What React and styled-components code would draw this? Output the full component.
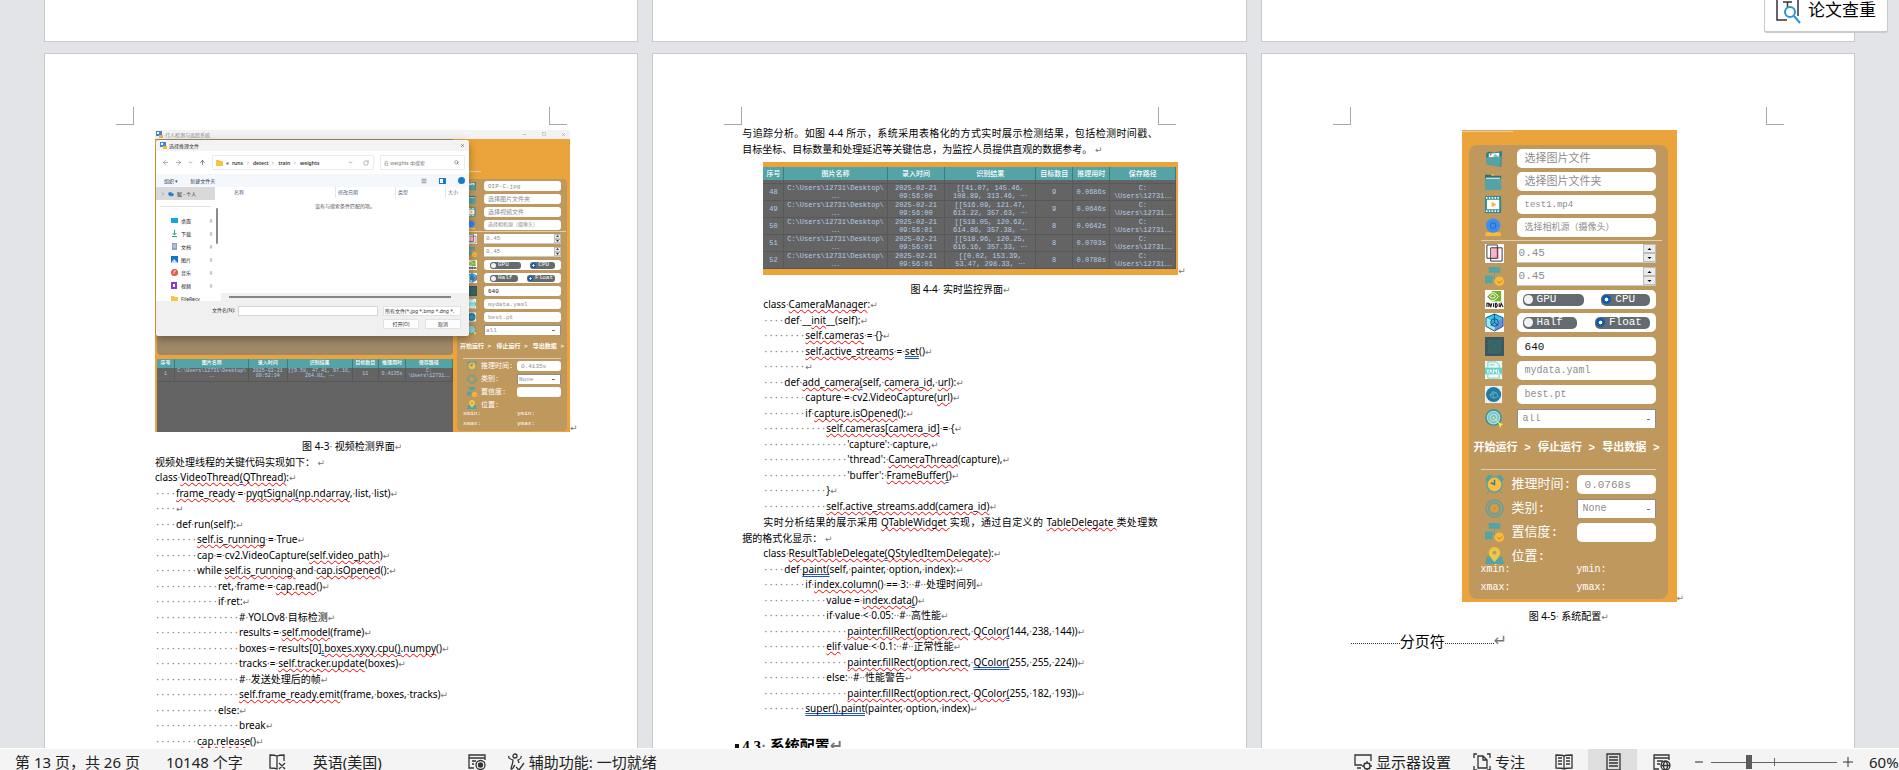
import React, { useId } from "react";
import styled, { createGlobalStyle, css, ThemeProvider } from "styled-components";
import {
  ArrowLeft, ArrowRight, ArrowUp, ChevronDown, ChevronRight, RotateCw, Search, Pin, X, Minus, Square, Menu, Cloud,
} from "lucide-react";

const UI = `"Noto Sans", "Noto Sans CJK SC", sans-serif`;
const MONO = `"Liberation Mono", "Noto Sans CJK SC", monospace`;

const Global = createGlobalStyle`
  *, *::before, *::after { box-sizing: border-box; }
  body { margin: 0; font-family: ${UI}; color: #000; }
  button, input, select { font: inherit; color: inherit; margin: 0; }
  svg { display: block; flex: none; }
`;

/* ---------- window ---------- */
const Shell = styled.div`
  height: 100vh;
  display: flex;
  flex-direction: column;
  overflow: hidden;
  position: relative;
`;
const Workspace = styled.main`
  flex: 1;
  min-height: 0;
  overflow: hidden;
  background: #e3e4e8;
  padding: 0 44px;
  display: grid;
  grid-template-columns: repeat(3, minmax(0, 1fr));
  grid-template-rows: 42px minmax(0, 1fr);
  gap: 11px 14px;
`;
const PageEnd = styled.div`
  background: #fff;
  border: 1px solid #c9cac9;
  border-top: 0;
`;
const Sheet = styled.article`
  background: #fff;
  border: 1px solid #c9cac9;
  border-bottom: 0;
  overflow: hidden;
  padding-top: 53px;
`;
const Margins = styled.div`
  display: flex;
  justify-content: space-between;
  padding: 0 70px 0 71px;
`;
const Corner = styled.i`
  width: 18px;
  height: 18px;
  border: solid #a8a8a8;
  border-width: ${(p) => (p.$right ? "0 0 1px 1px" : "0 1px 1px 0")};
`;
const Body = styled.div`
  padding: 0 88px 0 89px;
  font-size: 10px;
  line-height: 16px;
  white-space: nowrap;
`;
const Indented = styled.div`
  padding-left: 21px;
`;
const FigureRow = styled.div`
  margin: 5px 0 6px;
  display: flex;
  align-items: flex-end;
  justify-content: ${(p) => (p.$center ? "center" : "flex-start")};
`;
const Caption = styled.p`
  margin: 0;
  text-align: center;
`;
const Para = styled.p`
  margin: 0;
  text-indent: ${(p) => (p.$first ? "21px" : "0")};
  text-align-last: ${(p) => (p.$full ? "justify" : "left")};
  white-space: ${(p) => (p.$full ? "normal" : "nowrap")};
`;
const Mark = styled.span`
  color: #777;
  font-family: "DejaVu Sans", sans-serif;
  font-size: ${(p) => (p.$big ? "16px" : "9px")};
  line-height: 8px;
  margin-right: ${(p) => (p.$hang ? "-8px" : "0")};
`;
const Ret = (p) => <Mark {...p}>↵</Mark>;

/* ---------- code ---------- */
const CodeLine = styled.div`
  line-height: 15px;
  height: 15px;
  display: flex;
  align-items: baseline;
  white-space: pre;
  &:nth-child(even) { line-height: 16px; height: 16px; }
`;
const Indent = styled.span`
  display: inline-flex;
  justify-content: space-around;
  width: ${(p) => p.$n * 21}px;
  color: #777;
`;
const Dot = styled.span`
  color: #777;
`;
const Spell = styled.span`
  text-decoration: underline wavy #f00 1px;
  text-decoration-skip-ink: none;
  text-underline-offset: 1px;
`;
const Grammar = styled.span`
  text-decoration: underline double #1f55c8 1px;
  text-decoration-skip-ink: none;
  text-underline-offset: 1px;
`;
const dots = (s) => s.split(/( )/).map((t, i) => (t === " " ? <Dot key={i}>·</Dot> : t));
function Rich({ text }) {
  return text.split(/(‹[^›]*›|«[^»]*»)/).map((t, i) => {
    if (t[0] === "‹") return <Spell key={i}>{dots(t.slice(1, -1))}</Spell>;
    if (t[0] === "«") return <Grammar key={i}>{dots(t.slice(1, -1))}</Grammar>;
    return <span key={i}>{dots(t)}</span>;
  });
}
function Code({ lines }) {
  return (
    <Indented>
      {lines.map(([n, text], i) => (
        <CodeLine key={i}>
          {n > 0 && <Indent $n={n}>{Array.from({ length: n * 4 }, (_, k) => <span key={k}>·</span>)}</Indent>}
          <span><Rich text={text} /><Ret /></span>
        </CodeLine>
      ))}
    </Indented>
  );
}

const threadCode = [
  [0, "class ‹VideoThread›«(»‹QThread)›:"],
  [1, "‹frame_ready› = ‹pyqtSignal›«(»‹np.ndarray›, list, list)"],
  [1, ""],
  [1, "def run(self):"],
  [2, "‹self.is_running› = True"],
  [2, "cap = cv2.VideoCapture(‹self.video_path›)"],
  [2, "while ‹self.is_running ›and ‹cap.isOpened›():"],
  [3, "ret, frame = ‹cap.read›()"],
  [3, "if ret:"],
  [4, "# YOLOv8 目标检测"],
  [4, "results = ‹self.model›(frame)"],
  [4, "boxes = results[0]«.»‹boxes.xyxy.cpu(›«)»‹.numpy›()"],
  [4, "tracks = ‹self.tracker.update›(boxes)"],
  [4, "#  发送处理后的帧"],
  [4, "‹self.frame_ready.emit›(frame, boxes, tracks)"],
  [3, "else:"],
  [4, "break"],
  [2, "‹cap.release›()"],
];
const cameraCode = [
  [0, "class ‹CameraManager›:"],
  [1, "def __‹init›__(self):"],
  [2, "‹self.cameras› = {}"],
  [2, "‹self.active_streams› = «set»()"],
  [2, ""],
  [1, "def ‹add_camera›«(»self, ‹camera_id›, ‹url›):"],
  [2, "capture = cv2.VideoCapture(‹url›)"],
  [2, "if ‹capture.isOpened›():"],
  [3, "‹self.cameras[camera_id]› = {"],
  [4, "'capture': capture,"],
  [4, "'thread': ‹CameraThread›(capture),"],
  [4, "'buffer': ‹FrameBuffer›«(»)"],
  [3, "}"],
  [3, "‹self.active_streams.add(camera_id)›"],
];
const delegateCode = [
  [0, "class ‹ResultTableDelegate›«(»‹QStyledItemDelegate)›:"],
  [1, "def «paint(»self, painter, option, index):"],
  [2, "if ‹index.column›() == 3:  #  处理时间列"],
  [3, "value = ‹index.data›«(»)"],
  [3, "if value < 0.05:  #  高性能"],
  [4, "‹painter.fillRect(option.rect›, ‹QColor›«(»144, 238, 144))"],
  [3, "‹elif› value < 0.1:  #  正常性能"],
  [4, "‹painter.fillRect(option.rect›, «QColor(»255, 255, 224))"],
  [3, "else:  #  性能警告"],
  [4, "‹painter.fillRect(option.rect›, ‹QColor›«(»255, 182, 193))"],
  [2, "«super().paint»(painter, option, index)"],
];

/* ---------- configuration panel, in two sizes ---------- */
const full = {
  row: 19, gap: 4, joinGap: 5, wideGap: 5, pad: "4px 12px 2px 16px", iconCol: 32, icon: 19, radius: 8, r: 5,
  cn: 11, cnSmall: 9, num: 11, mono: 10, label: 13, btn: 11, btnRow: 41, coord: 10, coordRow: 18, outIcon: 27, outBox: 79,
  rule: "3px -6px 3px -4px", rule2: "0 0 5px -4px", short: 14, inset: 8, spin: 13, pill: 12, dot: 9, btnPad: "0 -4px 0 -11px",
};
const compact = {
  row: 10, gap: 3, joinGap: 3, wideGap: 3, pad: "2px 6px 2px 10px", iconCol: 17, icon: 10, radius: 4, r: 3,
  cn: 6, cnSmall: 5, num: 6, mono: 6, label: 7, btn: 6, btnRow: 23, coord: 6, coordRow: 10, outIcon: 14, outBox: 44,
  rule: "1px -5px 2px -4px", rule2: "0 0 2px -4px", short: 9, inset: 4, spin: 7, pill: 7, dot: 5, btnPad: "0 -3px 0 -7px",
};
const m = (k) => (p) => p.theme[k] + "px";

const Panel = styled.section`
  background: #bf985d;
  border-radius: ${m("radius")};
  padding: ${(p) => p.theme.pad};
  font-family: ${MONO};
  line-height: 1;
`;
const Rows = styled.div`
  display: flex;
  flex-direction: column;
  gap: ${(p) => p.theme[p.$wide ? "wideGap" : "gap"]}px;
  margin-bottom: ${(p) => (p.$join ? p.theme.joinGap : 0)}px;
`;
const ConfigRow = styled.div`
  display: grid;
  grid-template-columns: ${m("iconCol")} minmax(0, 1fr);
  align-items: center;
  height: ${m("row")};
`;
const OutRow = styled.div`
  display: grid;
  grid-template-columns: ${m("outIcon")} minmax(0, 1fr) ${m("outBox")};
  align-items: center;
  height: ${(p) => p.theme[p.$short ? "short" : "row"]}px;
  color: #fff;
  font-size: ${m("label")};
`;
const Rule = styled.hr`
  border: 0;
  height: 1px;
  background: #dccfba;
  margin: ${(p) => p.theme[p.$second ? "rule2" : "rule"]};
`;
const fieldBase = css`
  width: 100%;
  height: ${m("row")};
  min-width: 0;
  border: 0;
  outline: 0;
  background: #fff;
  color: #8d8d8d;
  padding: 0 0 0 ${m("inset")};
  border-radius: ${m("r")};
`;
const Field = styled.input`
  ${fieldBase}
  font-size: ${(p) => p.theme[p.$size || "cn"]}px;
  color: ${(p) => (p.$dark ? "#111" : "#8d8d8d")};
  &::placeholder { color: #8d8d8d; opacity: 1; }
`;
const Drop = styled.select`
  ${fieldBase}
  appearance: none;
  border-radius: 0;
  border: 1px solid #8d8d8d;
  border-width: 1px 1px 0 1px;
  padding-left: ${(p) => p.theme.inset - 3}px;
  font-size: ${m("mono")};
  background: linear-gradient(#777, #777) right 5px center / 3px 1px no-repeat #fff;
`;
const SpinBox = styled.div`
  display: flex;
  background: #fff;
  border-bottom: 1px solid #c9c9c9;
  height: ${m("row")};
`;
const SpinInput = styled.input`
  flex: 1;
  min-width: 0;
  border: 0;
  padding: 0 0 0 2px;
  background: none;
  color: #8d8d8d;
  font-size: ${m("num")};
  appearance: textfield;
  &::-webkit-inner-spin-button { appearance: none; margin: 0; }
`;
const SpinButtons = styled.div`
  display: flex;
  flex-direction: column;
  width: ${m("spin")};
`;
const SpinButton = styled.button`
  flex: 1;
  min-height: 0;
  padding: 0;
  display: grid;
  place-items: center;
  background: #ececec;
  border: 1px solid #bcbcbc;
`;
const SpinArrow = styled.svg`
  width: ${(p) => p.theme.spin - 8 > 0 ? p.theme.spin - 8 : 3}px;
  height: 2px;
`;
const Choices = styled.div`
  display: flex;
  justify-content: space-between;
  align-items: center;
  height: ${m("row")};
  background: #fff;
  border-radius: ${m("r")};
  padding: 0 6px;
`;
const Choice = styled.label`
  display: flex;
  align-items: center;
  gap: ${(p) => p.theme.inset / 2}px;
  height: ${m("pill")};
  width: ${(p) => p.$w}%;
  background: #636a70;
  color: #fff;
  border-radius: ${m("r")};
  font-size: ${m("num")};
`;
const Radio = styled.input`
  appearance: none;
  flex: none;
  width: ${m("dot")};
  height: ${m("dot")};
  && { margin: 0 0 0 1px; }
  border-radius: 50%;
  background: #f2f2f2;
  &:checked { background: radial-gradient(circle, #fff 0 25%, #0a5ab4 35%); }
`;
const Actions = styled.div`
  display: flex;
  justify-content: space-between;
  align-items: center;
  height: ${m("btnRow")};
  margin: ${(p) => p.theme.btnPad};
`;
const Action = styled.button`
  border: 0;
  padding: 0;
  background: none;
  color: #fff;
  font-size: ${m("btn")};
  font-weight: 700;
  white-space: nowrap;
`;
const Coords = styled.div`
  display: grid;
  grid-template-columns: minmax(0, 1fr) ${m("outBox")};
  margin-left: -4px;
  line-height: ${m("coordRow")};
  color: #fff;
  font-size: ${m("coord")};
`;

const TEAL = "#54a3a6";
const art = {
  image: <><path d="M1 5 3 3h4l1 1 10-2-1 17L2 16Z" fill="#2f7f84" /><path d="M4 5 15 4v5H4Z" fill="#fff" /><circle cx="6" cy="6" r="1" fill="#e66" /><path d="m8 8 3-3 4 4Z" fill="#7cc" /><path d="m1 9 16-1-1 11-14-3Z" fill={TEAL} /></>,
  folder: <><path d="M0 3h6l1 1h10v4H0Z" fill="#2d7074" /><path d="M7 2h2v2H7Z" fill="#f4b836" /><path d="M1 6h15v3H1Z" fill="#fff" /><path d="M0 7h17v12H0Z" fill={TEAL} /></>,
  video: <><path d="M0 1h17v18H0Z" fill="#2f8b8f" /><path d="M1 3h15M1 17h15" stroke="#fff" strokeWidth="2" strokeDasharray="1.6 1.4" /><path d="M2 5h13v10H2Z" fill="#fff" /><path d="m7 7 5 3-5 3Z" fill="#f9b52d" /></>,
  camera: <><path d="M1 15h15l1 4H0Z" fill="#f9b93c" /><circle cx="8.500" cy="8" r="7.500" fill="#3d8ef0" /><circle cx="8.500" cy="8" r="3" fill="none" stroke="#1f66c8" /></>,
  overlap: <><path d="M0 0h20v20H0Z" fill="#fff" /><path d="M7 4h8v12H7Z" fill="#ffb0cd" /><path d="M2 1h11v14H2ZM6 4h12v14H6Z" fill="none" stroke="#333" /></>,
  flow: <><path d="M4 0h12v6H4ZM0 9h8v8H0Z" fill={TEAL} /><path d="M10 6v6H7" stroke={TEAL} fill="none" /><circle cx="15" cy="15" r="5" fill="#fbb93b" /><path d="m13 15 2 2 3-3" fill="none" stroke="#b97f18" /></>,
  nvidia: <><path d="M0 0h20v20H0Z" fill="#fff" /><path d="M7 1h10v11H7Z" fill="#76b52b" /><path d="M2 7c4-6 9-5 12 0-4 5-8 6-12 0Z" fill="#76b52b" stroke="#fff" /><path d="M5 7c2-3 5-3 6 0-2 2-4 2-6 0Z" fill="none" stroke="#fff" /><path d="M2 18v-4h2v4m1-4 1 4 1-4m2 0v4m2-4v4h1l1-2-1-2Zm4 0v4m1 0 1-4 2 4" fill="none" stroke="#222" strokeWidth="1.200" /></>,
  cube: <><path d="M0 0h20v20H0Z" fill="#fff" /><path d="m10 1 9 4-9 5-9-5Z" fill="#25cdf5" /><path d="m1 5 9 5v9l-9-5Z" fill="#9be9ec" /><path d="m19 5-9 5v9l9-5Z" fill="#668ee8" /><circle cx="10" cy="10" r="4" fill="#3bb4dc" stroke="#234a78" /><path d="m10 1 9 4v9l-9 5-9-5V5ZM10 10V1m0 9 4 3m-4-3-4 3" fill="none" stroke="#234a78" /></>,
  size: <><path d="M0 0h20v20H0Z" fill="#3a5765" /><path d="M3 3h14v14H3Z" fill="#3a6867" /><circle cx="10" cy="10" r="4" fill="none" stroke="#336064" /></>,
  yaml: <><path d="M0 0h18v19H0Z" fill="#eafafa" /><path d="M3 7V1h9l3 3v3M3 14v4h12v-4M5 4h5" fill="none" stroke="#67cfc8" /><path d="M0 7h18v7H0Z" fill="#67cfc8" /><path d="m2 9 1 2 1-2m-1 2v2m2 0 1-4 2 4m1 0V9l2 2 1-2v4m2-4v4h2" fill="none" stroke="#fff" /></>,
  globe: <><path d="M0 1h18v18H0Z" fill="#e9f1f5" /><circle cx="9" cy="10" r="8" fill="#25799f" /><path d="m5 11 3-4 4 1 2 4-5 2Zm3-4 1 7m3-6-7 3" stroke="#5eacc9" fill="none" /></>,
  target: <><circle cx="9" cy="9" r="8" fill="#a8dcda" stroke="#319398" strokeWidth="1.500" /><circle cx="9" cy="9" r="5" fill="none" stroke="#5aabad" /><circle cx="9" cy="9" r="2" fill="none" stroke="#5aabad" /><path d="m9 9 7 7" stroke="#f3ef63" /><path d="m14 14 5 2-2 1-1 3Z" fill="#fbf757" /></>,
  clock: <><path d="M1 4 4 0h3L2 7Zm18 0-3-4h-3l5 7ZM4 17l-2 3m14-3 2 3" fill={TEAL} stroke={TEAL} /><circle cx="10" cy="10" r="8" fill="#fbbd3d" stroke={TEAL} strokeWidth="1.500" /><path d="M10 5v5L6 8" fill="none" stroke="#2f77a8" strokeWidth="1.500" /></>,
  rings: <><circle cx="10" cy="10" r="9" fill="none" stroke={TEAL} strokeWidth="1.500" /><circle cx="10" cy="10" r="6" fill="none" stroke={TEAL} strokeWidth="1.500" /><circle cx="10" cy="10" r="3" fill="none" stroke="#e39d34" strokeWidth="2" /></>,
  pin: <><path d="M2 10h16l2 8H0Z" fill={TEAL} /><path d="M10 16C5 10 4 8 4 6a6 6 0 0 1 12 0c0 2-1 4-6 10Z" fill="#ecc846" /><circle cx="10" cy="6" r="2" fill="#bf985d" /></>,
};
const IconSvg = styled.svg`
  width: ${m("icon")};
  height: ${m("icon")};
`;
const Art = ({ name }) => <IconSvg viewBox="0 0 20 20" aria-hidden="true">{art[name]}</IconSvg>;

function TextRow({ icon, label, value, hint, size, dark }) {
  return (
    <ConfigRow>
      <Art name={icon} />
      <Field aria-label={label} defaultValue={value} placeholder={hint} $size={size} $dark={dark} />
    </ConfigRow>
  );
}
function SpinRow({ icon, label }) {
  return (
    <ConfigRow>
      <Art name={icon} />
      <SpinBox>
        <SpinInput type="number" step="0.01" defaultValue="0.45" aria-label={label} />
        <SpinButtons>
          <SpinButton aria-label="+"><SpinArrow viewBox="0 0 4 2"><path d="M0 2 2 0 4 2Z" /></SpinArrow></SpinButton>
          <SpinButton aria-label="-"><SpinArrow viewBox="0 0 4 2"><path d="M0 0 2 2 4 0Z" /></SpinArrow></SpinButton>
        </SpinButtons>
      </SpinBox>
    </ConfigRow>
  );
}
function RadioRow({ icon, options, widths }) {
  const name = useId();
  return (
    <ConfigRow>
      <Art name={icon} />
      <Choices>
        {options.map((o, i) => (
          <Choice key={o} $w={widths[i]}><Radio type="radio" name={name} defaultChecked={i === 1} />{o}</Choice>
        ))}
      </Choices>
    </ConfigRow>
  );
}
function ConfigPanel({ metrics, image, video, time }) {
  const id = useId();
  return (
    <ThemeProvider theme={metrics}>
      <Panel>
        <Rows>
          <TextRow icon="image" label="图片文件" value={image} hint="选择图片文件" size={image ? "mono" : "cn"} />
          <TextRow icon="folder" label="图片文件夹" hint="选择图片文件夹" />
          <TextRow icon="video" label="视频文件" value={video} hint="选择视频文件" size={video ? "cnSmall" : "cn"} />
          <TextRow icon="camera" label="相机源" hint="选择相机源（摄像头）" size="cnSmall" />
        </Rows>
        <Rule />
        <Rows $join>
          <SpinRow icon="overlap" label="IoU" />
          <SpinRow icon="flow" label="Conf" />
          <RadioRow icon="nvidia" options={["GPU", "CPU"]} widths={[48, 38]} />
          <RadioRow icon="cube" options={["Half", "Float"]} widths={[43, 43]} />
        </Rows>
        <Rows $wide>
          <TextRow icon="size" label="imgsz" value="640" size="num" dark />
          <TextRow icon="yaml" label="data" value="mydata.yaml" size="mono" />
          <TextRow icon="globe" label="model" value="best.pt" size="mono" />
          <ConfigRow><Art name="target" /><Drop aria-label="classes"><option>all</option></Drop></ConfigRow>
        </Rows>
        <Actions>
          <Action>开始运行 &gt;</Action><Action>停止运行 &gt;</Action><Action>导出数据 &gt;</Action>
        </Actions>
        <Rule $second />
        <Rows $wide>
          <OutRow><Art name="clock" /><label htmlFor={id + "t"}>推理时间:</label><Field id={id + "t"} defaultValue={time} $size="num" /></OutRow>
          <OutRow><Art name="rings" /><label htmlFor={id + "c"}>类别:</label><Drop id={id + "c"}><option>None</option></Drop></OutRow>
          <OutRow><Art name="flow" /><label htmlFor={id + "f"}>置信度:</label><Field id={id + "f"} /></OutRow>
          <OutRow $short><Art name="pin" /><span>位置:</span></OutRow>
        </Rows>
        <Coords><span>xmin:</span><span>ymin:</span><span>xmax:</span><span>ymax:</span></Coords>
      </Panel>
    </ThemeProvider>
  );
}

/* ---------- results table ---------- */
const Results = styled.table`
  width: 100%;
  border-collapse: collapse;
  table-layout: fixed;
  background: #646464;
  color: #b4cde4;
  font-family: ${MONO};
  font-size: ${(p) => (p.$small ? 5 : 7)}px;
  line-height: ${(p) => (p.$small ? 5 : 8)}px;
  text-align: center;
  th, td { padding: 0; border-right: 1px solid #585858; overflow: hidden; white-space: pre; }
  td { border-bottom: 1px solid #585858; height: ${(p) => (p.$small ? 13 : 17)}px; }
  th { height: ${(p) => (p.$small ? 9 : 13)}px; background: ${TEAL}; color: #fff; font-weight: 500; border-color: #3d7c80; }
`;
const Gap = styled.td`
  && { height: 3px; }
`;
const heads = ["序号", "图片名称", "录入时间", "识别结果", "目标数目", "推理用时", "保存路径"];
function ResultTable({ rows, cols, small, scrolled }) {
  return (
    <Results $small={small}>
      <colgroup>{cols.map((w, i) => <col key={i} width={w} />)}</colgroup>
      <thead><tr>{heads.map((h) => <th key={h}>{h}</th>)}</tr></thead>
      <tbody>
        {scrolled && <tr>{heads.map((h) => <Gap key={h} />)}</tr>}
        {rows.map((r) => <tr key={r[0]}>{r.map((c, i) => <td key={i}>{c}</td>)}</tr>)}
      </tbody>
    </Results>
  );
}
const FILE = "C:\\Users\\12731\\Desktop\\\n⋯";
const SAVE = "C:\n\\Users\\12731⋯";
const monitorRows = [
  ["48", FILE, "2025-02-21\n09:56:00", "[[41.07, 145.46,\n108.89, 313.46, ⋯", "9", "0.0686s", SAVE],
  ["49", FILE, "2025-02-21\n09:56:00", "[[516.09, 121.47,\n613.22, 357.63, ⋯", "9", "0.0646s", SAVE],
  ["50", FILE, "2025-02-21\n09:56:01", "[[518.05, 120.62,\n614.86, 357.38, ⋯", "8", "0.0642s", SAVE],
  ["51", FILE, "2025-02-21\n09:56:01", "[[518.96, 120.25,\n616.16, 357.33, ⋯", "8", "0.0703s", SAVE],
  ["52", FILE, "2025-02-21\n09:56:01", "[[0.02, 153.39,\n53.47, 298.33, ⋯", "8", "0.0788s", SAVE],
];

/* ---------- figures ---------- */
const TableShot = styled.div`
  flex: none;
  width: 415px;
  height: 113px;
  background: #eba43b;
  padding: 5px 2px 4px 0;
`;
const PanelShot = styled.div`
  flex: none;
  width: 215px;
  height: 472px;
  background: #eba43b;
  padding: 1px 9px 1px 7px;
`;
const TopLine = styled.div`
  width: 51px;
  height: 1px;
  margin: 0 0 13px -7px;
  background: #dccfba;
`;
const AppShot = styled.div`
  flex: none;
  position: relative;
  width: 415px;
  height: 302px;
  background: #eba43b;
  display: flex;
  flex-direction: column;
  overflow: hidden;
  font-size: 5px;
  line-height: 8px;
`;
const AppTitle = styled.div`
  height: 9px;
  background: #f3f3f3;
  color: #888;
  display: flex;
  align-items: center;
  gap: 2px;
  padding: 0 4px 0 1px;
`;
const Push = styled.span`
  flex: 1;
`;
const WinControls = styled.span`
  display: flex;
  gap: 15px;
`;
const AppMain = styled.div`
  flex: 1;
  min-height: 0;
  display: flex;
  justify-content: space-between;
  padding: 0 3px 0 2px;
`;
const LeftSide = styled.div`
  width: 296px;
  display: flex;
  flex-direction: column;
  gap: 4px;
`;
const VideoArea = styled.div`
  height: 216px;
  background: #a08868;
  border-radius: 0 0 4px 4px;
`;
const TableArea = styled.div`
  flex: 1;
  background: #646464;
`;
const RightSide = styled.div`
  width: 110px;
`;
const SideLine = styled.div`
  height: 1px;
  width: 24px;
  margin: 32px 0 7px;
  background: #dccfba;
`;

const Dialog = styled.div`
  position: absolute;
  left: 1px;
  top: 10px;
  width: 313px;
  height: 196px;
  background: #fff;
  border-radius: 3px;
  overflow: hidden;
  box-shadow: 0 3px 8px rgba(0, 0, 0, 0.35);
  color: #333;
  display: flex;
  flex-direction: column;
`;
const Bar = styled.div`
  display: flex;
  align-items: center;
  flex: none;
  height: ${(p) => p.$h}px;
  gap: ${(p) => p.$gap || 0}px;
  padding: 0 ${(p) => p.$end || 4}px 0 ${(p) => p.$start || 4}px;
  background: ${(p) => p.$bg || "#fff"};
`;
const Address = styled.div`
  display: flex;
  align-items: center;
  gap: 3px;
  flex: 1;
  height: 15px;
  padding: 0 4px 0 3px;
  border: 1px solid #ececec;
  border-radius: 1px;
  font-weight: 600;
`;
const AddressTools = styled.span`
  display: flex;
  align-items: center;
  gap: 10px;
`;
const SearchBox = styled.label`
  display: flex;
  align-items: center;
  width: 85px;
  height: 15px;
  padding: 0 5px 0 3px;
  border: 1px solid #ececec;
`;
const BareInput = styled.input`
  flex: 1;
  min-width: 0;
  border: 0;
  padding: 0;
  background: none;
  &::placeholder { color: #777; opacity: 1; }
`;
const PlainButton = styled.button`
  border: 0;
  padding: 0;
  background: none;
  display: flex;
  align-items: center;
  color: #31445f;
`;
const Browser = styled.div`
  display: flex;
  flex: 1;
  min-height: 0;
  overflow: hidden;
`;
const Places = styled.nav`
  width: 59px;
  overflow: hidden;
`;
const Place = styled.a`
  display: flex;
  align-items: center;
  gap: 3px;
  height: 13px;
  padding: 0 2px 0 ${(p) => (p.$root ? 5 : 15)}px;
  background: ${(p) => (p.$root ? "#d9d9d9" : "none")};
  color: #222;
  text-decoration: none;
  white-space: nowrap;
`;
const PlaceRule = styled.hr`
  margin: 6px 4px 7px;
  border: 0;
  height: 1px;
  background: #e3e3e3;
`;
const NavScroll = styled.i`
  width: 2px;
  height: 36px;
  margin: 21px 3px 0 1px;
  background: #8b8b8b;
  border-radius: 1px;
`;
const Files = styled.div`
  flex: 1;
  display: flex;
  flex-direction: column;
`;
const FileHead = styled.div`
  display: grid;
  grid-template-columns: 101px 60px 50px 1fr;
  height: 11px;
  line-height: 11px;
  padding-left: 13px;
  color: #4a5f80;
  span + span { border-left: 1px solid #e6e6e6; padding-left: 2px; }
`;
const Empty = styled.p`
  margin: 4px 0 0;
  flex: 1;
  text-align: center;
  color: #555;
`;
const HScroll = styled.div`
  height: 8px;
  background: #f0f0f0;
  padding: 3px 18px 3px 8px;
  &::before { content: ""; display: block; height: 2px; background: #858585; }
`;
const Foot = styled.div`
  height: 35px;
  background: #f0f0f0;
  padding: 5px 8px 0 56px;
  display: grid;
  grid-template-columns: 26px 140px 1fr;
  grid-auto-rows: 10px;
  gap: 3px 0;
  white-space: nowrap;
`;
const FootInput = styled.input`
  width: 100%;
  min-width: 0;
  border: 1px solid #d6d6d6;
  background: #fff;
  padding: 0 2px;
`;
const FootSelect = styled.select`
  min-width: 0;
  margin-left: 5px;
  appearance: none;
  border: 1px solid #e2e2e2;
  background: #fff;
  padding: 0 1px;
`;
const FootButtons = styled.div`
  grid-column: 3;
  display: grid;
  grid-template-columns: 1fr 1fr;
  gap: 6px;
  margin-left: 5px;
`;
const FootButton = styled.button`
  border: 1px solid #e2e2e2;
  background: #fdfdfd;
  border-radius: 1px;
  padding: 0;
  line-height: 7px;
`;

const AppLogo = () => (
  <svg width="7" height="7" viewBox="0 0 7 7"><path d="M0 0h6v5H0Z" fill="#4285d6" /><path d="M1 1h2v2H1Z" fill="#fff" /><path d="M3 4h4v3H3Z" fill="#f5b73a" /></svg>
);
const placeIcons = {
  desk: <path d="M0 1h7v5H0Z" fill="#1aa3d8" />,
  down: <path d="M3.500 0v5M1.500 3l2 2 2-2M1 6.500h5" stroke="#27a577" fill="none" />,
  doc: <><path d="M1 0h5v7H1Z" fill="#8aa4c2" /><path d="M2 2h3M2 4h3" stroke="#fff" strokeWidth=".6" /></>,
  pic: <><path d="M0 0h7v7H0Z" fill="#1473cf" /><path d="m0 7 3-4 4 4Z" fill="#bfe2ff" /></>,
  music: <><circle cx="3.500" cy="3.500" r="3.500" fill="#e0584e" /><path d="M3 5V2h2" stroke="#fff" fill="none" strokeWidth=".8" /></>,
  video: <><path d="M0 0h6v7H0Z" fill="#8338e0" /><path d="M2 2h2v3H2Z" fill="#fff" /></>,
  folder: <path d="M0 1h3l1 1h3v5H0Z" fill="#f7c445" />,
};
const places = [["desk", "桌面"], ["down", "下载"], ["doc", "文档"], ["pic", "图片"], ["music", "音乐"], ["video", "视频"], ["folder", "FileRecv"]];
const PlaceIcon = ({ n }) => <svg width="7" height="7" viewBox="0 0 7 7">{placeIcons[n]}</svg>;

function OpenDialog() {
  return (
    <Dialog>
      <Bar $h={11} $gap={2} $bg="#f3f3f3"><AppLogo /><span>选择推理文件</span><Push /><X size={5} /></Bar>
      <Bar $h={23} $gap={6} $start={6}>
        <ArrowLeft size={7} color="#777" /><ArrowRight size={7} color="#777" /><ChevronDown size={5} /><ArrowUp size={7} />
        <Address>
          <PlaceIcon n="folder" /><span>«</span><span>runs</span><ChevronRight size={4} /><span>detect</span><ChevronRight size={4} /><span>train</span><ChevronRight size={4} /><span>weights</span>
          <Push />
          <AddressTools><ChevronDown size={5} /><RotateCw size={6} color="#777" /></AddressTools>
        </Address>
        <SearchBox><BareInput placeholder="在 weights 中搜索" aria-label="搜索" /><Search size={5} /></SearchBox>
      </Bar>
      <Bar $h={13} $gap={12} $start={8} $bg="#f4f7fc">
        <PlainButton>组织 ▾</PlainButton><PlainButton>新建文件夹</PlainButton><Push />
        <Menu size={6} /><svg width="7" height="6"><path d="M0 0h7v6H0Z" fill="#157bd0" /><path d="M1 1h3v4H1Z" fill="#fff" /></svg>
        <svg width="7" height="7"><circle cx="3.500" cy="3.500" r="3.500" fill="#157bd0" /></svg>
      </Bar>
      <Browser>
        <Places>
          <Place href="#" $root><ChevronRight size={4} /><Cloud size={6} color="#1a80d4" fill="#1a80d4" />赋 - 个人</Place>
          <PlaceRule />
          {places.map(([n, t]) => <Place href="#" key={n}><PlaceIcon n={n} />{t}<Push />{n !== "folder" && <Pin size={4} color="#777" />}</Place>)}
        </Places>
        <NavScroll />
        <Files>
          <FileHead><span>名称</span><span>修改日期</span><span>类型</span><span>大小</span></FileHead>
          <Empty>没有与搜索条件匹配的项。</Empty>
          <HScroll />
        </Files>
      </Browser>
      <Foot>
        <label htmlFor="file-name">文件名(N):</label><FootInput id="file-name" />
        <FootSelect aria-label="文件类型"><option>所有文件(*.jpg *.bmp *.dng *.</option></FootSelect>
        <FootButtons><FootButton>打开(O)</FootButton><FootButton>取消</FootButton></FootButtons>
      </Foot>
    </Dialog>
  );
}

/* ---------- page furniture ---------- */
const BreakLine = styled.div`
  display: flex;
  align-items: center;
  margin-top: 7px;
  font-size: 15px;
  line-height: 20px;
`;
const Dotted = styled.i`
  width: 49px;
  margin-top: 4px;
  border-top: 1px dotted #333;
`;
const Heading = styled.h2`
  display: flex;
  align-items: center;
  gap: 3px;
  margin: 18px 0 0 -7px;
  font: 700 15px/24px "Liberation Serif", "Noto Sans CJK SC", serif;
`;
const Bullet = styled.i`
  width: 4px;
  height: 4px;
  background: #111;
`;
const CheckButton = styled.button`
  position: absolute;
  right: 11px;
  top: -12px;
  width: 124px;
  height: 45px;
  display: flex;
  align-items: center;
  gap: 7px;
  padding: 0 0 0 10px;
  background: #fff;
  border: 1px solid #c9cac9;
  border-bottom-width: 2px;
  border-radius: 3px;
  font-size: 17px;
  line-height: 24px;
  white-space: nowrap;
`;

function Page({ children }) {
  return <Sheet><Margins><Corner /><Corner $right /></Margins><Body>{children}</Body></Sheet>;
}

/* ---------- status bar ---------- */
const Status = styled.footer`
  flex: none;
  height: 22px;
  border-top: 1px solid #fff;
  background: #f4f4f4;
  overflow: hidden;
  font-size: 15px;
  line-height: 26px;
`;
const StatusRow = styled.div`
  display: flex;
  align-items: center;
  height: 26px;
  color: #222;
`;
const Group = styled.div`
  display: flex;
  align-items: center;
  gap: ${(p) => p.$gap}px;
  padding-left: ${(p) => p.$pad || 0}px;
`;
const StatusButton = styled.button`
  display: flex;
  align-items: center;
  justify-content: center;
  gap: 4px;
  height: 26px;
  width: ${(p) => (p.$tile ? "49px" : "auto")};
  border: 0;
  padding: 0;
  background: ${(p) => (p.$on ? "#dedede" : "none")};
  white-space: nowrap;
`;
const Zoom = styled.input`
  appearance: none;
  width: 126px;
  height: 16px;
  margin: 0;
  background:
    linear-gradient(#666, #666) center / 1px 8px no-repeat,
    linear-gradient(#666, #666) center / 100% 1px no-repeat;
  &::-webkit-slider-thumb { appearance: none; width: 6px; height: 14px; background: #5c5c5c; }
`;
const Percent = styled.span`
  width: 30px;
  overflow: hidden;
  white-space: nowrap;
`;
const S = ({ children, w = 18 }) => (
  <svg width={w} height="18" viewBox={`0 0 ${w} 18`} fill="none" stroke="#333" strokeWidth="1.300" aria-hidden="true">{children}</svg>
);

function StatusBar() {
  return (
    <Status>
      <StatusRow>
        <Group $gap={26} $pad={15}>
          <StatusButton>第 13 页，共 26 页</StatusButton>
          <StatusButton>10148 个字</StatusButton>
          <StatusButton aria-label="校对"><S><path d="M8 3v13c-2-1-4-1-7-1V2c3 0 5 0 7 1 2-1 4-1 7-1v6M10 10l6 6m0-6-6 6" /></S></StatusButton>
          <StatusButton>英语(美国)</StatusButton>
        </Group>
        <Group $gap={21} $pad={86}>
          <StatusButton aria-label="宏"><S><path d="M6 15H1V2h16v5M1 5h16M4 8h4M4 11h2" /><circle cx="12.500" cy="12" r="4.500" /><circle cx="12.500" cy="12" r="2" fill="#333" /></S></StatusButton>
          <StatusButton><S><circle cx="8" cy="3" r="2" /><path d="M2 3c-1 2 1 3 4 4 0 4-2 7-2 9 2 1 2-2 4-4M14 3c1 2-1 3-3 4l1 3m-3 4 3 3 5-7" /></S>辅助功能: 一切就绪</StatusButton>
        </Group>
        <Push />
        <Group $gap={22}>
          <StatusButton><S><path d="M8 12H1V2h16v6M3 15h4" /><circle cx="13" cy="13" r="3" /><path d="M13 8v2m0 6v2m-5-5h2m6 0h2m-8-3 1 1m5 5-1-1m1-5-1 1" /></S>显示器设置</StatusButton>
          <StatusButton><S><path d="M5 3h5l4 4v8H5ZM10 3v4h4M1 5V1h3m10 0h3v4M1 13v4h3m10 0h3v-4" /></S>专注</StatusButton>
        </Group>
        <Group $gap={0} $pad={14}>
          <StatusButton $tile aria-label="阅读视图"><S><path d="M9 3v13c-2-1-4-1-8-1V2c4 0 6 0 8 1 2-1 4-1 8-1v13c-4 0-6 0-8 1M3 5h4M3 8h4M3 11h4m4-6h4m-4 3h4m-4 3h4" /></S></StatusButton>
          <StatusButton $tile $on aria-label="页面视图"><S><path d="M3 1h13v16H3ZM5 4h9M5 7h9M5 10h9M5 13h9" /></S></StatusButton>
          <StatusButton $tile aria-label="Web 版式视图"><S><path d="M6 16H1V2h15v5M1 5h15M4 8h6M4 11h3" /><circle cx="12.500" cy="12.500" r="4.500" /><path d="M8 12.500h9M12.500 8c-3 3-3 6 0 9 3-3 3-6 0-9" /></S></StatusButton>
        </Group>
        <Group $gap={6} $pad={7}>
          <StatusButton aria-label="缩小"><Minus size={12} strokeWidth={2} /></StatusButton>
          <Zoom type="range" min="0" max="100" defaultValue="29" aria-label="缩放" />
          <StatusButton aria-label="放大"><svg width="10" height="10" stroke="#333"><path d="M5 0v10M0 5h10" /></svg></StatusButton>
        </Group>
        <Group $gap={0} $pad={16}><Percent>60%</Percent></Group>
      </StatusRow>
    </Status>
  );
}

export default function App() {
  return (
    <Shell>
      <Global />
      <Workspace>
        <PageEnd /><PageEnd /><PageEnd />
        <Page>
          <Indented>
            <FigureRow>
              <AppShot>
                <AppTitle><AppLogo /><span>行人检测与追踪系统</span><Push /><WinControls><Minus size={5} /><Square size={4} /><X size={5} /></WinControls></AppTitle>
                <AppMain>
                  <LeftSide>
                    <VideoArea />
                    <TableArea>
                      <ResultTable small cols={["6%", "25%", "13%", "22%", "9%", "9%", "16%"]}
                        rows={[["1", FILE, "2025-02-21\n09:52:34", "[[9.58, 47.41, 97.16,\n264.01, ⋯", "11", "0.4135s", SAVE]]} />
                    </TableArea>
                  </LeftSide>
                  <RightSide>
                    <SideLine />
                    <ConfigPanel metrics={compact} image="OIP-C.jpg" time="0.4135s" />
                  </RightSide>
                </AppMain>
                <OpenDialog />
              </AppShot>
              <Ret $hang />
            </FigureRow>
            <Caption>图 4-3<Dot>·</Dot> 视频检测界面<Ret /></Caption>
            <Para>视频处理线程的关键代码实现如下： <Ret /></Para>
          </Indented>
          <Code lines={threadCode} />
        </Page>
        <Page>
          <Para $full>与追踪分析。如图 4-4 所示，系统采用表格化的方式实时展示检测结果，包括检测时间戳、</Para>
          <Para>目标坐标、目标数量和处理延迟等关键信息，为监控人员提供直观的数据参考。 <Ret /></Para>
          <Indented>
            <FigureRow>
              <TableShot>
                <ResultTable scrolled cols={["5%", "25%", "14%", "22%", "9%", "9%", "16%"]} rows={monitorRows} />
              </TableShot>
              <Ret $hang />
            </FigureRow>
            <Caption>图 4-4<Dot>·</Dot> 实时监控界面<Ret /></Caption>
          </Indented>
          <Code lines={cameraCode} />
          <Para $first $full>实时分析结果的展示采用 <Spell>QTableWidget </Spell>实现，通过自定义的 <Spell>TableDelegate </Spell>类处理数</Para>
          <Para>据的格式化显示： <Ret /></Para>
          <Code lines={delegateCode} />
          <Heading><Bullet /><span>4.3<Dot>·</Dot> 系统配置<Ret $big /></span></Heading>
        </Page>
        <Page>
          <Indented>
            <FigureRow $center>
              <PanelShot>
                <TopLine />
                <ConfigPanel metrics={full} video="test1.mp4" time="0.0768s" />
              </PanelShot>
              <Ret $hang />
            </FigureRow>
            <Caption>图 4-5<Dot>·</Dot> 系统配置<Ret /></Caption>
          </Indented>
          <BreakLine><Dotted />分页符<Dotted /><Ret $big /></BreakLine>
        </Page>
      </Workspace>
      <CheckButton>
        <svg width="26" height="28" viewBox="0 0 26 28" fill="none" strokeWidth="1.500">
          <path d="M12 24H2V2h21v18M8 6h9M12.500 6v6" stroke="#333" />
          <circle cx="15" cy="16" r="5" stroke="#2a94da" strokeWidth="2" /><path d="m19 20 6 7" stroke="#2a94da" strokeWidth="2" />
        </svg>
        论文查重
      </CheckButton>
      <StatusBar />
    </Shell>
  );
}
